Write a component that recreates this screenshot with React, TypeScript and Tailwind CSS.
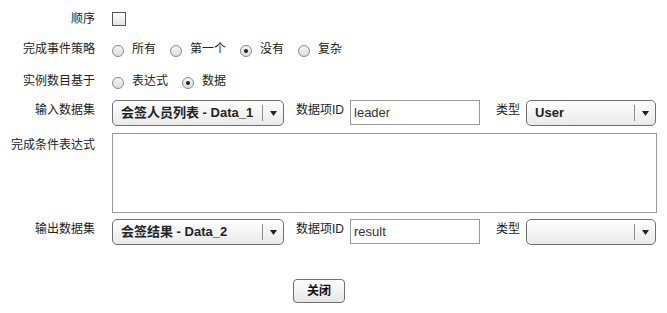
import React from "react";

const FONT = '"Liberation Sans", "Noto Sans CJK SC", sans-serif';

function Radio({ checked, label }: { checked?: boolean; label: string }) {
  return (
    <span className="flex items-center gap-[8px]">
      <span className="mt-[3px] flex h-[12px] w-[12px] items-center justify-center rounded-full border border-[#8a8a8a] bg-gradient-to-b from-[#f4f4f4] to-[#dedede]">
        {checked && <span className="h-[4px] w-[4px] rounded-full bg-[#222]" />}
      </span>
      <span>{label}</span>
    </span>
  );
}

function Select({ value, width }: { value: string; width: string }) {
  return (
    <div
      className={`flex h-[26px] ${width} items-center rounded-[5px] border border-[#6f6f6f] bg-gradient-to-b from-[#ffffff] to-[#e9e9e9]`}
    >
      <span className="flex-1 truncate pl-[8px] text-[13px] font-bold text-[#222]">{value}</span>
      <span className="h-[16px] w-px bg-[#8c8c8c]" />
      <span className="flex w-[20px] justify-center">
        <svg width="7" height="5" viewBox="0 0 7 5">
          <path d="M0 0h7L3.5 5z" fill="#222" />
        </svg>
      </span>
    </div>
  );
}

function Label({ children, className = "" }: { children: React.ReactNode; className?: string }) {
  return <div className={`w-[95px] shrink-0 text-right leading-[16px] ${className}`}>{children}</div>;
}

export default function App() {
  return (
    <div className="h-[313px] w-[667px] bg-white pt-[12px] text-[12px] leading-[14px] text-[#222]" style={{ fontFamily: FONT }}>
      <div className="flex h-[14px] items-center">
        <Label>顺序</Label>
        <span className="ml-[17px] h-[14px] w-[14px] border border-[#555] bg-gradient-to-b from-[#ffffff] to-[#e4e4e4]" />
      </div>

      <div className="mt-[16px] flex h-[14px] items-center">
        <Label>完成事件策略</Label>
        <div className="ml-[17px] flex gap-[14px]">
          <Radio label="所有" />
          <Radio label="第一个" />
          <Radio checked label="没有" />
          <Radio label="复杂" />
        </div>
      </div>

      <div className="mt-[18px] flex h-[14px] items-center">
        <Label>实例数目基于</Label>
        <div className="ml-[17px] flex gap-[14px]">
          <Radio label="表达式" />
          <Radio checked label="数据" />
        </div>
      </div>

      <div className="mt-[12px] flex items-start">
        <Label className="pt-[2px]">输入数据集</Label>
        <div className="ml-[17px]">
          <Select value="会签人员列表 - Data_1" width="w-[172px]" />
        </div>
        <span className="ml-[12px] pt-[2px] leading-[16px]">数据项ID</span>
        <input
          readOnly
          value="leader"
          className="ml-[6px] h-[25px] w-[130px] border border-[#9a9a9a] px-[3px] text-[13px] text-[#333] outline-none"
        />
        <span className="ml-[16px] pt-[2px] leading-[16px]">类型</span>
        <div className="ml-[6px]">
          <Select value="User" width="w-[130px]" />
        </div>
      </div>

      <div className="mt-[7px] flex items-start">
        <Label className="pt-[4px]">完成条件表达式</Label>
        <textarea
          readOnly
          className="ml-[17px] block h-[80px] w-[545px] resize-none border border-[#9a9a9a] outline-none"
        />
      </div>

      <div className="mt-[6px] flex items-start">
        <Label className="pt-[2px]">输出数据集</Label>
        <div className="ml-[17px]">
          <Select value="会签结果 - Data_2" width="w-[172px]" />
        </div>
        <span className="ml-[12px] pt-[2px] leading-[16px]">数据项ID</span>
        <input
          readOnly
          value="result"
          className="ml-[6px] h-[25px] w-[130px] border border-[#9a9a9a] px-[3px] text-[13px] text-[#333] outline-none"
        />
        <span className="ml-[16px] pt-[2px] leading-[16px]">类型</span>
        <div className="ml-[6px]">
          <Select value="" width="w-[130px]" />
        </div>
      </div>

      <div className="mt-[34px] pl-[293px]">
        <button className="h-[24px] w-[52px] rounded-[4px] border border-[#6f6f6f] bg-gradient-to-b from-[#ffffff] to-[#e6e6e6] text-[12px] font-bold text-[#111]">
          关闭
        </button>
      </div>
    </div>
  );
}
